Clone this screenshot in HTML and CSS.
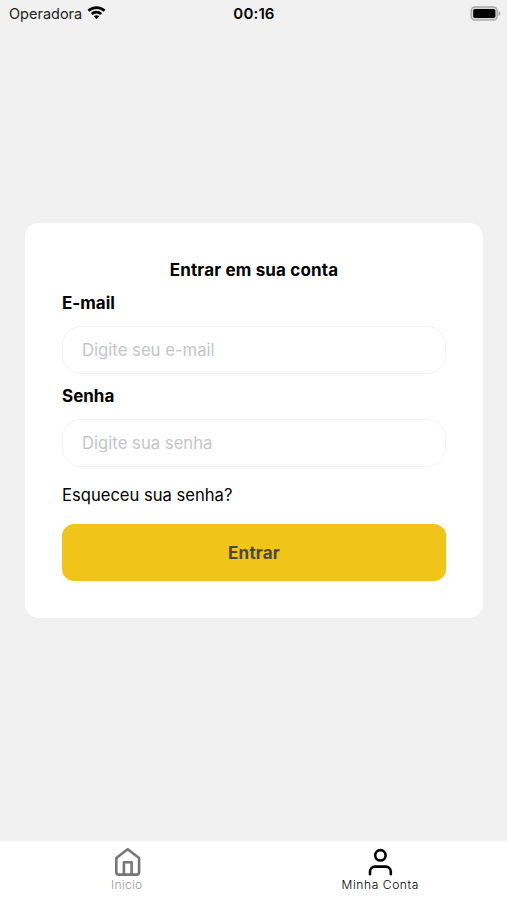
FILE: index.html
```html
<!DOCTYPE html>
<html lang="pt-BR">
<head>
<meta charset="utf-8">
<title>Minha Conta</title>
<link rel="stylesheet" href="styles.css">
</head>
<body>
<header class="status">
  <div class="carrier"><span class="carrier-name">Operadora</span>
    <svg class="wifi" width="19" height="14" viewBox="0 0 20 14"><path d="M10 0C6.300 0 3 1.300.6 3.700l1.900 2.100A10.800 10.800 0 0 1 10 2.800c2.900 0 5.500 1.100 7.500 3l1.900-2.100A13.500 13.500 0 0 0 10 0ZM10 4.700c-2.300 0-4.400.9-5.900 2.400L6 9.200a5.800 5.800 0 0 1 8 0l1.900-2.100A8.500 8.500 0 0 0 10 4.700ZM10 9.300c-1.100 0-2.100.4-2.800 1.100L10 13.500l2.800-3.100A4 4 0 0 0 10 9.300Z"/></svg>
  </div>
  <time class="clock">00:16</time>
  <svg class="battery" width="31" height="15" viewBox="0 0 31 15"><rect x="1.200" y="1" width="26" height="13" rx="3.800" fill="#d8d8d8" stroke="#aaa" stroke-width="1.400"/><rect x="3.200" y="3" width="22.200" height="9" rx="1.800"/><path d="M28.500 5v5c1.200-.4 1.900-1.300 1.900-2.500S29.700 5.400 28.500 5Z" fill="#aaa"/></svg>
</header>
<main class="content">
  <form class="card">
    <h1 class="title">Entrar em sua conta</h1>
    <label class="label" for="email">E-mail</label>
    <input class="field" id="email" type="email" placeholder="Digite seu e-mail">
    <label class="label" for="senha">Senha</label>
    <input class="field" id="senha" type="password" placeholder="Digite sua senha">
    <a class="forgot">Esqueceu sua senha?</a>
    <button class="submit" type="button">Entrar</button>
  </form>
</main>
<nav class="tabs">
  <a class="tab tab-home"><svg width="32" height="32" viewBox="0 0 32 32"><path d="M5.300 12 16.700 3.300 28.100 12v14a2.600 2.600 0 0 1-2.600 2.600H7.900A2.600 2.600 0 0 1 5.300 26ZM12.900 28.600V16.200h7.700v12.400"/></svg><span class="tab-label">Inicio</span></a>
  <a class="tab tab-account"><svg width="32" height="32" viewBox="0 0 32 32"><circle cx="16.400" cy="9.300" r="5.200"/><path d="M6 28.200v-2.600a5 5 0 0 1 5-5h10.800a5 5 0 0 1 5 5v2.600"/></svg><span class="tab-label">Minha Conta</span></a>
</nav>
</body>
</html>
```

FILE: styles.css
```css
* { box-sizing: border-box; }
body { margin: 0; height: 900px; display: flex; flex-direction: column; background: #f1f1f1; color: #000; font-family: Inter, "Liberation Sans", sans-serif; overflow: hidden; }
.status { height: 27px; display: grid; grid-template-columns: 1fr auto 1fr; align-items: center; padding: 0 6px 0 9px; font-size: 15px; }
.carrier { display: flex; align-items: center; gap: 5px; }
.carrier-name { font-size: 14.500px; color: #222; }
.wifi { margin-bottom: 1px; }
.clock { font-weight: 600; letter-spacing: .15px; margin-right: 2px; }
.battery { justify-self: end; margin-bottom: 1px; }
.content { flex: 1; padding: 196px 24px 0 25px; }
.card { height: 395px; padding: 37px; background: #fff; border-radius: 14px; display: flex; flex-direction: column; }
.title { margin: 0 0 12px; text-align: center; font-size: 17px; line-height: 21px; font-weight: 650; letter-spacing: .16px; }
.label { font-size: 17px; line-height: 21px; font-weight: 700; margin-bottom: 12px; }
.field { width: 100%; height: 48px; flex: none; margin: 0 0 12px; padding: 0 19px; border: 1px solid #f3f3f3; border-radius: 19px; font: 16.700px Inter, sans-serif; background: #fff; }
.field::placeholder { color: #c5c5c7; opacity: 1; }
.forgot { margin-top: 6px; font-size: 16.600px; line-height: 21px; }
.submit { height: 57px; flex: none; margin: 18px 0 0; border: 0; border-radius: 12px; background: #f0c419; color: #4b4836; font: 700 17px Inter, sans-serif; letter-spacing: .2px; }
.tabs { height: 59px; background: #fff; display: flex; }
.tab { flex: 1; display: flex; flex-direction: column; align-items: center; padding-top: 5px; font: 300 12px/14px Inter, sans-serif; }
.tab svg { fill: none; stroke: currentColor; stroke-width: 2.600; stroke-linecap: round; stroke-linejoin: round; }
.tab-label { letter-spacing: .6px; }
.tab-home { color: #777; }
.tab-home .tab-label { color: #999; letter-spacing: .3px; }
```
